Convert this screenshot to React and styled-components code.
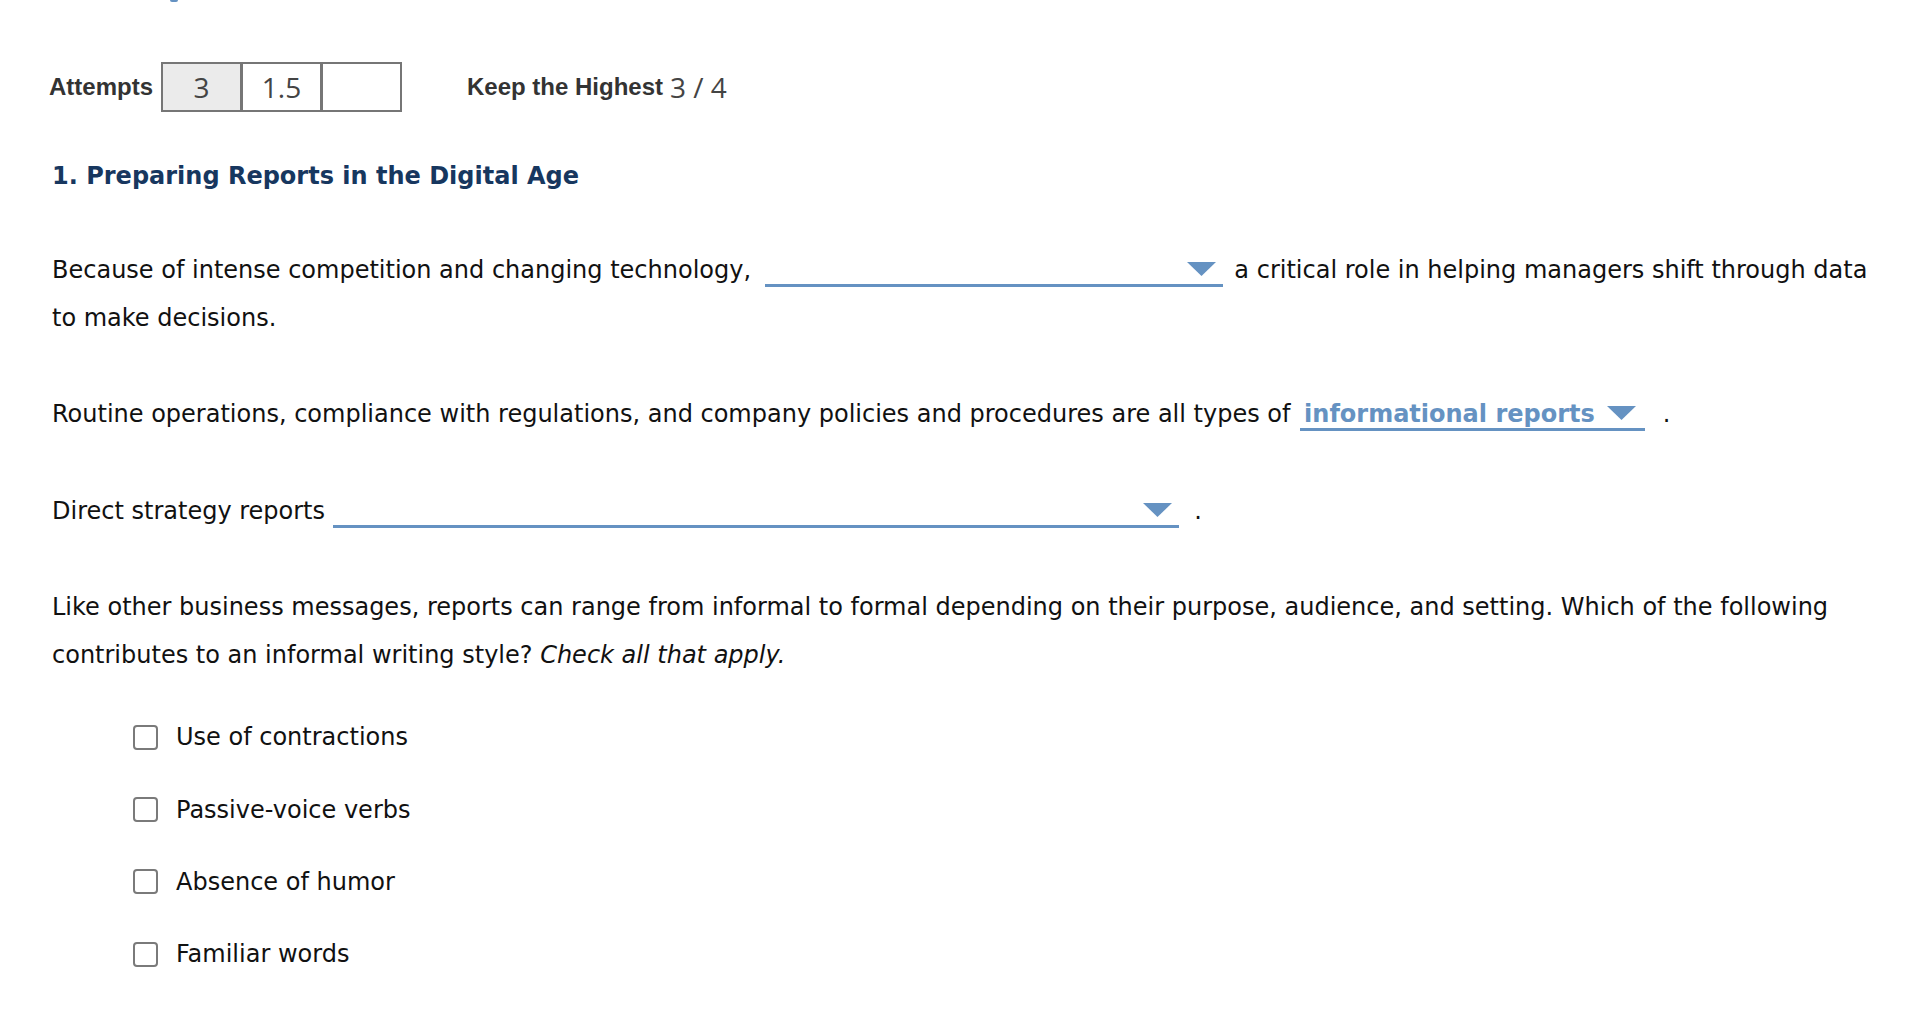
import React from "react";
import styled, { createGlobalStyle } from "styled-components";

const GlobalStyle = createGlobalStyle`
  html, body { margin: 0; padding: 0; background: #ffffff; }
  body { font-family: "DejaVu Sans", Verdana, sans-serif; color: #111; }
`;

const BLUE = "#6592c2";

const Page = styled.div`
  padding: 0 40px 0 52px;
  width: 1916px;
  box-sizing: border-box;
`;

const TopMark = styled.div`
  margin-left: 118px;
  width: 8px;
  height: 2px;
  background: ${BLUE};
  border-radius: 0 0 3px 3px;
`;

const AttemptsRow = styled.div`
  display: flex;
  align-items: center;
  margin-top: 60px;
  margin-left: -3px;
  height: 50px;
  font-family: "Liberation Sans", Arial, sans-serif;
  color: #333;
`;

const Label = styled.span`
  font-weight: bold;
  font-size: 24px;
  margin-left: ${(p) => p.$gap || 0}px;
`;

const Boxes = styled.div`
  display: flex;
  margin-left: 8px;
`;

const ScoreBox = styled.div`
  width: 77px;
  height: 46px;
  border: 2px solid #767676;
  margin-left: ${(p) => (p.$first ? 0 : -1)}px;
  background: ${(p) => (p.$shaded ? "#ebebeb" : "#ffffff")};
  display: flex;
  align-items: center;
  justify-content: center;
  font-family: "Open Sans", sans-serif;
  font-size: 28px;
  color: #444;
`;

const Score = styled.span`
  font-family: "Open Sans", sans-serif;
  font-size: 28px;
  color: #444;
  margin-left: 7px;
`;

const Heading = styled.h2`
  margin: 49px 0 0;
  font-size: 24px;
  line-height: 30px;
  font-weight: bold;
  color: #17375f;
`;

const Para = styled.p`
  margin: ${(p) => p.$top}px 0 0;
  font-size: 24px;
  line-height: 48px;
  color: #111;
`;

const Drop = styled.span`
  display: inline-flex;
  align-items: flex-start;
  justify-content: space-between;
  width: ${(p) => p.$w}px;
  box-sizing: border-box;
  padding: 0 ${(p) => p.$pr || 7}px 2px 4px;
  margin-left: ${(p) => p.$ml || 0}px;
  margin-right: ${(p) => p.$mr || 0}px;
  border-bottom: 3px solid ${BLUE};
  line-height: 24px;
`;

const DropValue = styled.span`
  font-weight: bold;
  color: ${BLUE};
  line-height: 24px;
`;

const Arrow = styled.svg`
  margin-top: 4px;
  flex: none;
`;

const Italic = styled.em`
  font-style: italic;
`;

const CheckList = styled.div`
  margin-top: 22px;
  margin-left: 81px;
  display: flex;
  flex-direction: column;
`;

const CheckRow = styled.label`
  display: flex;
  align-items: center;
  height: 72.4px;
  font-size: 24px;
  color: #111;
`;

const Box = styled.span`
  width: 21px;
  height: 21px;
  border: 2px solid #7a7a7a;
  border-radius: 4px;
  box-sizing: content-box;
  margin-right: 18px;
  flex: none;
`;

function Dropdown({ w, value, ml, mr, pr }) {
  return (
    <Drop $w={w} $ml={ml} $mr={mr} $pr={pr}>
      <DropValue>{value || "\u00a0"}</DropValue>
      <Arrow width="29" height="14" viewBox="0 0 29 14">
        <polygon points="0,0 29,0 14.5,14" fill={BLUE} />
      </Arrow>
    </Drop>
  );
}

const options = [
  "Use of contractions",
  "Passive-voice verbs",
  "Absence of humor",
  "Familiar words",
];

export default function App() {
  return (
    <>
      <GlobalStyle />
      <Page>
        <TopMark />
        <AttemptsRow>
          <Label>Attempts</Label>
          <Boxes>
            <ScoreBox $first $shaded>3</ScoreBox>
            <ScoreBox>1.5</ScoreBox>
            <ScoreBox></ScoreBox>
          </Boxes>
          <Label $gap={65}>Keep the Highest</Label>
          <Score>3 / 4</Score>
        </AttemptsRow>
        <Heading>1. Preparing Reports in the Digital Age</Heading>
        <Para $top={55}>
          Because of intense competition and changing technology,{" "}
          <Dropdown w={458} ml={6} mr={4} /> a critical role in helping managers shift through data to
          make decisions.
        </Para>
        <Para $top={48}>
          Routine operations, compliance with regulations, and company policies and procedures are all
          types of <Dropdown w={345} value="informational reports" pr={9} mr={10} ml={2} /> .
        </Para>
        <Para $top={49}>
          Direct strategy reports <Dropdown w={846} mr={8} /> .
        </Para>
        <Para $top={48}>
          Like other business messages, reports can range from informal to formal depending on their
          purpose, audience, and setting. Which of the following contributes to an informal writing
          style? <Italic>Check all that apply.</Italic>
        </Para>
        <CheckList>
          {options.map((o) => (
            <CheckRow key={o}>
              <Box />
              {o}
            </CheckRow>
          ))}
        </CheckList>
      </Page>
    </>
  );
}
